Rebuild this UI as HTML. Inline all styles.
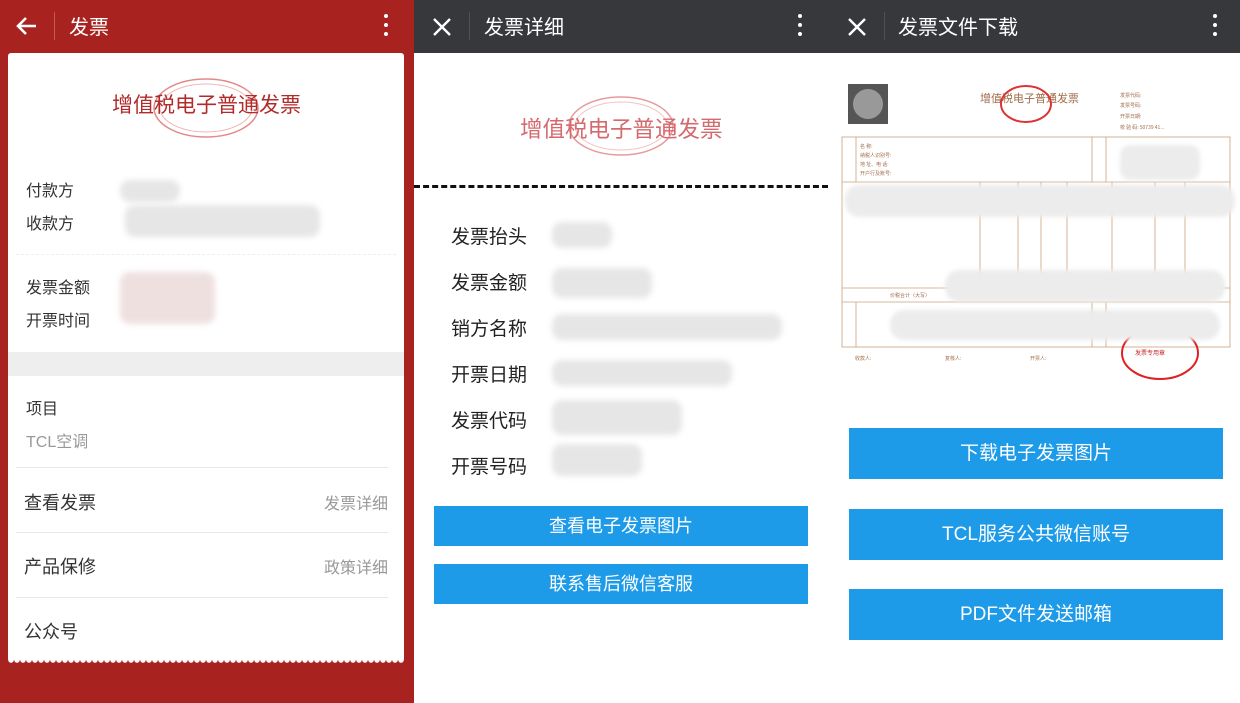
<!DOCTYPE html>
<html><head><meta charset="utf-8"><style>
*{margin:0;padding:0;box-sizing:border-box}
body{width:1240px;height:703px;position:relative;overflow:hidden;background:#fff;font-family:"Liberation Sans","Noto Sans CJK SC",sans-serif}
.a{position:absolute;white-space:nowrap}
.hdr{position:absolute;top:0;height:53px;color:#fff;font-size:20px}
.dots{position:absolute;top:14px;width:4px}
.dots i{display:block;width:4px;height:4px;border-radius:2px;background:#fff;margin-bottom:5px}
.vd{position:absolute;top:12px;width:1px;height:28px;background:rgba(255,255,255,.25)}
.l1{font-size:16px;color:#333}
.l2{font-size:19px;color:#222}
.btn{position:absolute;background:#1e9be8;color:#fff;text-align:center;font-size:18px}
.blur{position:absolute;background:#e6e6e6;border-radius:10px;filter:blur(3px)}
.hr{position:absolute;height:1px;background:#e8e8e8}
</style></head><body>
<!-- panel 1 -->
<div class="a" style="left:0;top:0;width:414px;height:703px;background:#a8231f"></div>
<div class="hdr" style="left:0;width:414px">
<svg class="a" style="left:16px;top:16px" width="22" height="20" viewBox="0 0 22 20"><path d="M20 10H3M10 2L2 10l8 8" stroke="#fff" stroke-width="2.6" fill="none"/></svg>
<div class="vd" style="left:54px"></div>
<div class="a" style="left:69px;top:11px">发票</div>
<div class="dots" style="left:384px"><i></i><i></i><i></i></div>
</div>
<div class="a" style="left:8px;top:53px;width:396px;height:609px;background:#fff;border-radius:3px"></div>
<div class="a" style="left:8px;top:660px;width:396px;height:4px;background:radial-gradient(circle at 3px 0,#fff 2.5px,#a8231f 3px);background-size:6px 4px"></div>
<svg class="a" style="left:150px;top:76px" width="112" height="64"><ellipse cx="56" cy="32" rx="52" ry="29" fill="none" stroke="#e28a8a" stroke-width="1.5"/><ellipse cx="56" cy="32" rx="46" ry="24" fill="none" stroke="#f0b5b5" stroke-width="1"/></svg>
<div class="a" style="left:112px;top:89px;font-size:21px;color:#b12b2b">增值税电子普通发票</div>
<div class="a l1" style="left:26px;top:177px">付款方</div>
<div class="a l1" style="left:26px;top:210px">收款方</div>
<div class="blur" style="left:120px;top:180px;width:60px;height:22px"></div>
<div class="blur" style="left:125px;top:205px;width:195px;height:32px"></div>
<div class="a" style="left:16px;top:254px;width:380px;border-top:1px dashed #eee"></div>
<div class="a l1" style="left:26px;top:274px">发票金额</div>
<div class="a l1" style="left:26px;top:307px">开票时间</div>
<div class="blur" style="left:120px;top:272px;width:95px;height:52px;background:#efe0e0"></div>
<div class="a" style="left:8px;top:352px;width:396px;height:24px;background:#eeeeee"></div>
<div class="a l1" style="left:26px;top:395px">项目</div>
<div class="a l1" style="left:26px;top:428px;color:#999">TCL空调</div>
<div class="hr" style="left:16px;top:467px;width:372px"></div>
<div class="a" style="left:24px;top:489px;font-size:18px;color:#333">查看发票</div>
<div class="a" style="left:324px;top:490px;font-size:16px;color:#999">发票详细</div>
<div class="hr" style="left:16px;top:532px;width:372px"></div>
<div class="a" style="left:24px;top:553px;font-size:18px;color:#333">产品保修</div>
<div class="a" style="left:324px;top:554px;font-size:16px;color:#999">政策详细</div>
<div class="hr" style="left:16px;top:597px;width:372px"></div>
<div class="a" style="left:24px;top:618px;font-size:18px;color:#333">公众号</div>
<!-- panel 2 -->
<div class="hdr" style="left:414px;width:415px;background:#37383c">
<svg class="a" style="left:18px;top:17px" width="20" height="20"><path d="M2 2L18 18M18 2L2 18" stroke="#fff" stroke-width="2.4"/></svg>
<div class="vd" style="left:55px;background:rgba(255,255,255,.12)"></div>
<div class="a" style="left:70px;top:11px">发票详细</div>
<div class="dots" style="left:384px"><i></i><i></i><i></i></div>
</div>
<svg class="a" style="left:565px;top:94px" width="112" height="64"><ellipse cx="56" cy="32" rx="52" ry="29" fill="none" stroke="#e89a9a" stroke-width="1.5"/><ellipse cx="56" cy="32" rx="46" ry="24" fill="none" stroke="#f3c3c3" stroke-width="1"/></svg>
<div class="a" style="left:520px;top:112px;font-size:22.5px;color:#d46a6e">增值税电子普通发票</div>
<div class="a" style="left:414px;top:185px;width:414px;border-top:3px dashed #111"></div>
<div class="a l2" style="left:451px;top:222px">发票抬头</div>
<div class="a l2" style="left:451px;top:268px">发票金额</div>
<div class="a l2" style="left:451px;top:314px">销方名称</div>
<div class="a l2" style="left:451px;top:360px">开票日期</div>
<div class="a l2" style="left:451px;top:406px">发票代码</div>
<div class="a l2" style="left:451px;top:452px">开票号码</div>
<div class="blur" style="left:552px;top:222px;width:60px;height:26px"></div>
<div class="blur" style="left:552px;top:268px;width:100px;height:30px"></div>
<div class="blur" style="left:552px;top:314px;width:230px;height:26px"></div>
<div class="blur" style="left:552px;top:360px;width:180px;height:26px"></div>
<div class="blur" style="left:552px;top:400px;width:130px;height:35px"></div>
<div class="blur" style="left:552px;top:444px;width:90px;height:32px"></div>
<div class="btn" style="left:434px;top:506px;width:374px;height:40px;line-height:40px">查看电子发票图片</div>
<div class="btn" style="left:434px;top:564px;width:374px;height:40px;line-height:40px">联系售后微信客服</div>
<!-- panel 3 -->
<div class="hdr" style="left:829px;width:411px;background:#37383c">
<svg class="a" style="left:18px;top:17px" width="20" height="20"><path d="M2 2L18 18M18 2L2 18" stroke="#fff" stroke-width="2.4"/></svg>
<div class="vd" style="left:55px;background:rgba(255,255,255,.12)"></div>
<div class="a" style="left:69px;top:11px">发票文件下载</div>
<div class="dots" style="left:384px"><i></i><i></i><i></i></div>
</div>
<svg class="a" style="left:830px;top:60px" width="410" height="330" viewBox="0 0 410 330">
<rect x="18" y="24" width="40" height="40" fill="#555"/><circle cx="38" cy="44" r="15" fill="#999"/>
<text x="150" y="42" font-size="11" fill="#a26b4a" font-family="Noto Sans CJK SC">增值税电子普通发票</text>
<ellipse cx="196" cy="44" rx="25" ry="18" fill="none" stroke="#d33" stroke-width="2"/>
<text x="290" y="37" font-size="5" fill="#a26b4a" font-family="Noto Sans CJK SC">发票代码:</text>
<text x="290" y="47" font-size="5" fill="#a26b4a" font-family="Noto Sans CJK SC">发票号码:</text>
<text x="290" y="58" font-size="5" fill="#a26b4a" font-family="Noto Sans CJK SC">开票日期:</text>
<text x="290" y="69" font-size="5" fill="#a26b4a" font-family="Noto Sans CJK SC">校 验 码: 50739 41...</text>
<g stroke="#c9a07e" fill="none" stroke-width="0.8">
<rect x="12" y="77" width="388" height="210"/>
<line x1="12" y1="122" x2="400" y2="122"/><line x1="12" y1="228" x2="400" y2="228"/><line x1="12" y1="242" x2="400" y2="242"/>
<line x1="262" y1="77" x2="262" y2="122"/><line x1="276" y1="77" x2="276" y2="122"/>
<line x1="150" y1="122" x2="150" y2="228"/><line x1="188" y1="122" x2="188" y2="228"/><line x1="211" y1="122" x2="211" y2="228"/><line x1="237" y1="122" x2="237" y2="228"/><line x1="282" y1="122" x2="282" y2="228"/><line x1="325" y1="122" x2="325" y2="228"/><line x1="355" y1="122" x2="355" y2="228"/>
<line x1="262" y1="242" x2="262" y2="287"/><line x1="276" y1="242" x2="276" y2="287"/>
<line x1="26" y1="77" x2="26" y2="122"/><line x1="26" y1="242" x2="26" y2="287"/>
</g>
<g fill="#a26b4a" font-size="5" font-family="Noto Sans CJK SC"><text x="30" y="88">名 称:</text><text x="30" y="97">纳税人识别号:</text><text x="30" y="106">地 址、电 话:</text><text x="30" y="115">开户行及账号:</text><text x="60" y="237">价税合计（大写）</text></g>
<ellipse cx="330" cy="293" rx="38" ry="26" fill="none" stroke="#d22" stroke-width="2"/>
<text x="305" y="295" font-size="6" fill="#c22" font-family="Noto Sans CJK SC">发票专用章</text>
<text x="25" y="300" font-size="5" fill="#a26b4a" font-family="Noto Sans CJK SC">收款人:</text>
<text x="115" y="300" font-size="5" fill="#a26b4a" font-family="Noto Sans CJK SC">复核人:</text>
<text x="200" y="300" font-size="5" fill="#a26b4a" font-family="Noto Sans CJK SC">开票人:</text>
<g fill="#ececec" filter="url(#b)"><rect x="15" y="125" width="390" height="32" rx="14"/><rect x="115" y="210" width="280" height="32" rx="14"/><rect x="60" y="250" width="330" height="30" rx="14"/><rect x="290" y="85" width="80" height="35" rx="10"/></g>
<defs><filter id="b"><feGaussianBlur stdDeviation="2"/></filter></defs>
</svg>
<div class="btn" style="left:849px;top:428px;width:374px;height:51px;line-height:51px;font-size:19px">下载电子发票图片</div>
<div class="btn" style="left:849px;top:509px;width:374px;height:51px;line-height:51px;font-size:19px">TCL服务公共微信账号</div>
<div class="btn" style="left:849px;top:589px;width:374px;height:51px;line-height:51px;font-size:19px">PDF文件发送邮箱</div>
</body></html>
